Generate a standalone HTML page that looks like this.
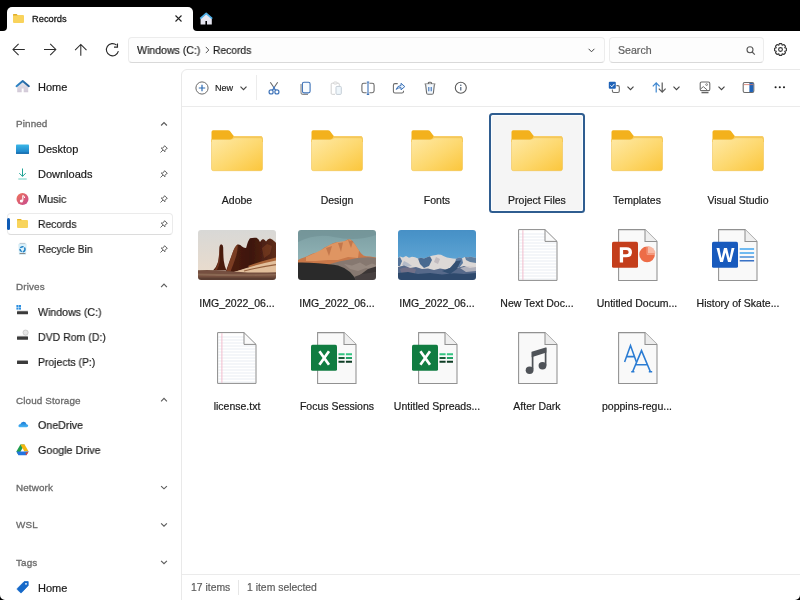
<!DOCTYPE html>
<html><head><meta charset="utf-8">
<style>
*{box-sizing:border-box;margin:0;padding:0}
html,body{width:800px;height:600px;overflow:hidden;background:#fff;font-family:"Liberation Sans",sans-serif;color:#1b1b1b}
.a{position:absolute}
svg{position:absolute;overflow:visible}
.t{position:absolute;white-space:nowrap;line-height:1;will-change:transform;-webkit-text-stroke:0.2px currentColor}
</style></head><body>

<!-- title / tab bar -->
<div class="a" style="left:0;top:0;width:800px;height:7px;background:#000"></div>
<div class="a" style="left:0;top:0;width:7px;height:31px;background:#000;border-bottom-right-radius:4px"></div>
<div class="a" style="left:193px;top:0;width:607px;height:31px;background:#000;border-bottom-left-radius:4px"></div>
<div class="a" style="left:7px;top:6px;width:7px;height:7px;background:#000"></div>
<div class="a" style="left:186px;top:6px;width:7px;height:7px;background:#000"></div>
<div class="a" style="left:7px;top:7px;width:186px;height:26px;background:#fff;border-radius:5px 5px 0 0"></div>

<!-- tab content -->
<svg style="left:13px;top:14px" width="11" height="9" viewBox="0 0 11 9">
  <path d="M0 1Q0 0 1 0H3.6L4.6 1H10Q11 1 11 2V8Q11 9 10 9H1Q0 9 0 8Z" fill="#f9d35c"/>
  <path d="M0 1Q0 0 1 0H3.6L4.6 1.4H0Z" fill="#dfae2c"/>
</svg>
<div class="t" style="left:31.6px;top:15px;font-size:9.3px;color:#1b1b1b;-webkit-text-stroke:0.3px #1b1b1b">Records</div>
<svg style="left:175px;top:15px" width="7" height="7" viewBox="0 0 7 7"><path d="M0.5 0.5L6.5 6.5M6.5 0.5L0.5 6.5" stroke="#222" stroke-width="1.1"/></svg>
<svg style="left:195px;top:8px" width="22" height="20" viewBox="195 8 22 20">
  <path d="M200.6 18.6L206.2 13.6L211.8 18.6V24.6H207V21H205.4V24.6H200.6Z" fill="#e6e6f0"/>
  <path d="M200.2 18.7L206.2 13.4L212.2 18.7" stroke="#4fb0e8" stroke-width="1.7" fill="none" stroke-linejoin="round"/>
</svg>

<!-- nav buttons -->
<svg style="left:0;top:36px" width="130" height="28" viewBox="0 36 130 28">
 <path d="M13.2 49.5H24.8M18.6 43.9L13 49.5L18.6 55.1" stroke="#2b2b2b" stroke-width="1.05" fill="none"/>
 <path d="M44 49.5H55.8M50.2 43.9L55.8 49.5L50.2 55.1" stroke="#2b2b2b" stroke-width="1.05" fill="none"/>
 <path d="M80.8 44.6V55.8M75.1 50.1L80.8 44.4L86.5 50.1" stroke="#2b2b2b" stroke-width="1.05" fill="none"/>
 <path d="M118.4 51.2A6.1 6.1 0 1 1 116.6 45.2" stroke="#2b2b2b" stroke-width="1.1" fill="none"/>
 <path d="M117.5 43.6V47.1H114" stroke="#2b2b2b" stroke-width="1.1" fill="none"/>
</svg>
<!-- address bar -->
<div class="a" style="left:128px;top:37px;width:477px;height:26px;background:#fdfdfd;border:1px solid #ececec;border-bottom-color:#d9d9d9;border-radius:4px"></div>
<div class="t" style="left:137px;top:45px;font-size:11px;transform:scaleX(0.96);transform-origin:0 0">Windows (C:)</div>
<svg style="left:204.6px;top:46px" width="5" height="8" viewBox="0 0 5 8"><path d="M0.8 0.9L3.8 4L0.8 7.1" stroke="#555" stroke-width="1" fill="none"/></svg>
<div class="t" style="left:212.8px;top:45px;font-size:11px;transform:scaleX(0.935);transform-origin:0 0">Records</div>
<svg style="left:588px;top:48px" width="7" height="5" viewBox="0 0 7 5"><path d="M0.6 0.8L3.5 3.8L6.4 0.8" stroke="#444" stroke-width="1" fill="none"/></svg>

<!-- search -->
<div class="a" style="left:609px;top:37px;width:155px;height:26px;background:#fdfdfd;border:1px solid #ececec;border-bottom-color:#d9d9d9;border-radius:4px"></div>
<div class="t" style="left:618.3px;top:45.3px;font-size:10.6px;color:#606060">Search</div>
<svg style="left:746px;top:46px" width="10" height="9" viewBox="0 0 10 9"><circle cx="4" cy="3.8" r="3" stroke="#555" stroke-width="1.1" fill="none"/><path d="M6.2 6L8.8 8.6" stroke="#555" stroke-width="1.1"/></svg>
<svg style="left:774px;top:43px" width="13" height="13" viewBox="0 0 13 13"><path d="M5.3 0.6H7.7L8.2 2.3L9.8 1.5L11.5 3.2L10.7 4.8L12.4 5.3V7.7L10.7 8.2L11.5 9.8L9.8 11.5L8.2 10.7L7.7 12.4H5.3L4.8 10.7L3.2 11.5L1.5 9.8L2.3 8.2L0.6 7.7V5.3L2.3 4.8L1.5 3.2L3.2 1.5L4.8 2.3Z" stroke="#333" stroke-width="1.1" fill="none" stroke-linejoin="round"/><circle cx="6.5" cy="6.5" r="1.9" stroke="#333" stroke-width="1.1" fill="none"/></svg>

<!-- content card -->
<div class="a" style="left:181px;top:69px;width:640px;height:560px;border:1px solid #e9e9e9;border-radius:6px;background:#fff"></div>
<div class="a" style="left:182px;top:106px;width:618px;height:1px;background:#ebebeb"></div>
<div class="a" style="left:182px;top:574px;width:618px;height:1px;background:#ebebeb"></div>

<!-- window corners -->
<svg style="left:0;top:595px" width="5" height="5" viewBox="0 0 5 5"><path d="M0 0V5H5A5 5 0 0 1 0 0Z" fill="#000"/></svg>
<svg style="left:795px;top:595px" width="5" height="5" viewBox="0 0 5 5"><path d="M5 0V5H0A5 5 0 0 0 5 0Z" fill="#000"/></svg>
<!-- sidebar -->
<div class="a" style="left:7px;top:213px;width:166px;height:22px;background:#fff;border:1px solid #ebebeb;border-bottom-color:#dcdcdc;border-radius:4px"></div>
<div class="a" style="left:7px;top:218px;width:2.5px;height:12px;background:#0f5bb5;border-radius:2px"></div>
<div class="t" style="left:37.6px;top:82.1px;font-size:11px;color:#1b1b1b;">Home</div>
<div class="t" style="left:16.2px;top:119.2px;font-size:9.9px;color:#6c6c6c;-webkit-text-stroke:0.32px #6c6c6c;letter-spacing:0.12px">Pinned</div>
<div class="t" style="left:16.2px;top:282.2px;font-size:9.9px;color:#6c6c6c;-webkit-text-stroke:0.32px #6c6c6c;letter-spacing:0.12px">Drives</div>
<div class="t" style="left:16.2px;top:396.0px;font-size:9.9px;color:#6c6c6c;-webkit-text-stroke:0.32px #6c6c6c;letter-spacing:0.12px">Cloud Storage</div>
<div class="t" style="left:16.2px;top:483.0px;font-size:9.9px;color:#6c6c6c;-webkit-text-stroke:0.32px #6c6c6c;letter-spacing:0.12px">Network</div>
<div class="t" style="left:16.2px;top:520.3px;font-size:9.9px;color:#6c6c6c;-webkit-text-stroke:0.32px #6c6c6c;letter-spacing:0.12px">WSL</div>
<div class="t" style="left:16.2px;top:557.8px;font-size:9.9px;color:#6c6c6c;-webkit-text-stroke:0.32px #6c6c6c;letter-spacing:0.12px">Tags</div>
<div class="t" style="left:37.6px;top:144.2px;font-size:11px;color:#1b1b1b;">Desktop</div>
<div class="t" style="left:37.6px;top:169.4px;font-size:11px;color:#1b1b1b;">Downloads</div>
<div class="t" style="left:37.6px;top:194.4px;font-size:11px;color:#1b1b1b;transform:scaleX(0.986);transform-origin:0 0">Music</div>
<div class="t" style="left:37.6px;top:218.6px;font-size:11px;color:#1b1b1b;transform:scaleX(0.94);transform-origin:0 0">Records</div>
<div class="t" style="left:37.6px;top:243.7px;font-size:11px;color:#1b1b1b;transform:scaleX(0.94);transform-origin:0 0">Recycle Bin</div>
<div class="t" style="left:37.6px;top:306.5px;font-size:11px;color:#1b1b1b;transform:scaleX(0.963);transform-origin:0 0">Windows (C:)</div>
<div class="t" style="left:37.6px;top:331.5px;font-size:11px;color:#1b1b1b;transform:scaleX(0.957);transform-origin:0 0">DVD Rom (D:)</div>
<div class="t" style="left:37.6px;top:356.7px;font-size:11px;color:#1b1b1b;transform:scaleX(0.947);transform-origin:0 0">Projects (P:)</div>
<div class="t" style="left:37.6px;top:420.3px;font-size:11px;color:#1b1b1b;transform:scaleX(0.97);transform-origin:0 0">OneDrive</div>
<div class="t" style="left:37.6px;top:445.4px;font-size:11px;color:#1b1b1b;transform:scaleX(0.975);transform-origin:0 0">Google Drive</div>
<div class="t" style="left:37.6px;top:582.8px;font-size:11px;color:#1b1b1b;">Home</div>
<svg style="left:155px;top:116px" width="16" height="14" viewBox="155 116 16 14"><path d="M161.1 125.50L164 122.50L166.9 125.50" stroke="#5c5c5c" stroke-width="1.15" fill="none"/></svg>
<svg style="left:155px;top:278px" width="16" height="14" viewBox="155 278 16 14"><path d="M161.1 287.20L164 284.20L166.9 287.20" stroke="#5c5c5c" stroke-width="1.15" fill="none"/></svg>
<svg style="left:155px;top:392px" width="16" height="14" viewBox="155 392 16 14"><path d="M161.1 401.40L164 398.40L166.9 401.40" stroke="#5c5c5c" stroke-width="1.15" fill="none"/></svg>
<svg style="left:155px;top:482px" width="16" height="14" viewBox="155 482 16 14"><path d="M161.1 486.10L164 488.80L166.9 486.10" stroke="#5c5c5c" stroke-width="1.15" fill="none"/></svg>
<svg style="left:155px;top:520px" width="16" height="14" viewBox="155 520 16 14"><path d="M161.1 523.40L164 526.10L166.9 523.40" stroke="#5c5c5c" stroke-width="1.15" fill="none"/></svg>
<svg style="left:155px;top:557px" width="16" height="14" viewBox="155 557 16 14"><path d="M161.1 560.90L164 563.60L166.9 560.90" stroke="#5c5c5c" stroke-width="1.15" fill="none"/></svg>
<svg style="left:160px;top:145px" width="8" height="8" viewBox="0 0 8 8"><path d="M4.6 0.7L7.3 3.4L6.2 3.9L4.9 5.6L5 6.8L1.2 3L2.4 3.1L4.1 1.8Z" stroke="#555" stroke-width="0.9" fill="none" stroke-linejoin="round"/><path d="M3.1 4.9L0.5 7.5" stroke="#555" stroke-width="0.9"/></svg>
<svg style="left:160px;top:170px" width="8" height="8" viewBox="0 0 8 8"><path d="M4.6 0.7L7.3 3.4L6.2 3.9L4.9 5.6L5 6.8L1.2 3L2.4 3.1L4.1 1.8Z" stroke="#555" stroke-width="0.9" fill="none" stroke-linejoin="round"/><path d="M3.1 4.9L0.5 7.5" stroke="#555" stroke-width="0.9"/></svg>
<svg style="left:160px;top:195px" width="8" height="8" viewBox="0 0 8 8"><path d="M4.6 0.7L7.3 3.4L6.2 3.9L4.9 5.6L5 6.8L1.2 3L2.4 3.1L4.1 1.8Z" stroke="#555" stroke-width="0.9" fill="none" stroke-linejoin="round"/><path d="M3.1 4.9L0.5 7.5" stroke="#555" stroke-width="0.9"/></svg>
<svg style="left:160px;top:220px" width="8" height="8" viewBox="0 0 8 8"><path d="M4.6 0.7L7.3 3.4L6.2 3.9L4.9 5.6L5 6.8L1.2 3L2.4 3.1L4.1 1.8Z" stroke="#555" stroke-width="0.9" fill="none" stroke-linejoin="round"/><path d="M3.1 4.9L0.5 7.5" stroke="#555" stroke-width="0.9"/></svg>
<svg style="left:160px;top:245px" width="8" height="8" viewBox="0 0 8 8"><path d="M4.6 0.7L7.3 3.4L6.2 3.9L4.9 5.6L5 6.8L1.2 3L2.4 3.1L4.1 1.8Z" stroke="#555" stroke-width="0.9" fill="none" stroke-linejoin="round"/><path d="M3.1 4.9L0.5 7.5" stroke="#555" stroke-width="0.9"/></svg>
<svg style="left:12px;top:76px" width="22" height="20" viewBox="12 76 22 20">
 <defs><linearGradient id="hb" x1="0" y1="0" x2="0" y2="1"><stop offset="0" stop-color="#e4e8f0"/><stop offset="1" stop-color="#d2c8d6"/></linearGradient>
 <linearGradient id="hr" x1="0" y1="0" x2="1" y2="0"><stop offset="0" stop-color="#2d86c8"/><stop offset="1" stop-color="#245f98"/></linearGradient></defs>
 <path d="M17.2 85.6L22.7 81.4L28.2 85.6V92.3H23.7V88.4H21.7V92.3H17.2Z" fill="url(#hb)"/>
 <path d="M16.5 86.2L22.7 81L28.9 86.2" stroke="url(#hr)" stroke-width="1.9" fill="none" stroke-linecap="round" stroke-linejoin="round"/>
</svg>
<svg style="left:16px;top:144px" width="13" height="10" viewBox="0 0 13 10">
 <defs><linearGradient id="dk" x1="0" y1="0" x2="0" y2="1"><stop offset="0" stop-color="#3bb8e8"/><stop offset="1" stop-color="#1a7cc4"/></linearGradient></defs>
 <rect x="0" y="0.4" width="13" height="9.4" rx="0.8" fill="url(#dk)"/>
 <rect x="0" y="8.6" width="13" height="1.2" fill="#1569aa"/>
</svg>
<svg style="left:18px;top:168px" width="9" height="12" viewBox="0 0 9 12">
 <path d="M4.5 0.5V8.3M1.3 5.2L4.5 8.4L7.7 5.2" stroke="#21a396" stroke-width="1" fill="none"/>
 <path d="M0.3 11H8.7" stroke="#6ccfc4" stroke-width="1"/>
</svg>
<svg style="left:16px;top:193px" width="13" height="12" viewBox="0 0 13 12">
 <defs><linearGradient id="mu" x1="0" y1="0" x2="1" y2="1"><stop offset="0" stop-color="#f0745a"/><stop offset="1" stop-color="#c6498f"/></linearGradient></defs>
 <circle cx="6.5" cy="6" r="6" fill="url(#mu)"/>
 <path d="M6.8 2.5V7.7" stroke="#fff" stroke-width="1.1"/><path d="M6.8 2.5Q8.8 3.2 8.6 5" stroke="#fff" stroke-width="1" fill="none"/>
 <circle cx="5.4" cy="8" r="1.6" fill="#fff"/>
</svg>
<svg style="left:17px;top:219px" width="11" height="9" viewBox="0 0 11 9">
 <path d="M0 1Q0 0 1 0H3.8L4.8 1H10Q11 1 11 2V8Q11 9 10 9H1Q0 9 0 8Z" fill="#f8d45c"/>
 <path d="M0 1Q0 0 1 0H3.8L4.8 1.3H0Z" fill="#e8b323"/>
</svg>
<svg style="left:18px;top:243px" width="9" height="12" viewBox="0 0 9 12">
 <path d="M0.8 1.2H8.2L7.6 11.4H1.4Z" fill="#dff3fb" stroke="#b9dcec" stroke-width="0.5"/>
 <path d="M1.6 0.4H7.4" stroke="#a8b8c4" stroke-width="0.8"/>
 <circle cx="4.5" cy="6.2" r="2.5" stroke="#1e7fc4" stroke-width="1.5" fill="none" stroke-dasharray="3.6 0.9"/>
 <path d="M1.6 10.5H7.4" stroke="#8a8a8a" stroke-width="1"/>
</svg>
<svg style="left:16px;top:304px" width="13" height="11" viewBox="0 0 13 11">
 <rect x="0.4" y="1" width="2.1" height="2.1" fill="#2d8fe0"/><rect x="2.9" y="1" width="2.1" height="2.1" fill="#2d8fe0"/>
 <rect x="0.4" y="3.5" width="2.1" height="2.1" fill="#2d8fe0"/><rect x="2.9" y="3.5" width="2.1" height="2.1" fill="#2d8fe0"/>
 <rect x="1" y="6.6" width="11" height="1" fill="#c9c9c9"/>
 <rect x="1" y="7.3" width="11" height="3" rx="0.5" fill="#3b3b3b"/>
</svg>
<svg style="left:16px;top:329px" width="13" height="12" viewBox="0 0 13 12">
 <circle cx="9.6" cy="3.6" r="2.6" fill="#e8e8e8" stroke="#b9b9b9" stroke-width="0.6"/>
 <rect x="1" y="6.8" width="11" height="1" fill="#c9c9c9"/>
 <rect x="1" y="7.5" width="11" height="3.2" rx="0.5" fill="#3b3b3b"/>
</svg>
<svg style="left:16px;top:358px" width="13" height="8" viewBox="0 0 13 8">
 <rect x="1" y="2" width="11" height="1" fill="#c9c9c9"/>
 <rect x="1" y="2.7" width="11" height="3.4" rx="0.5" fill="#3b3b3b"/>
</svg>
<svg style="left:17.6px;top:421.2px" width="10.6" height="7" viewBox="0 0 12 8" preserveAspectRatio="none">
 <defs><linearGradient id="od" x1="0" y1="0" x2="0" y2="1"><stop offset="0" stop-color="#1677d4"/><stop offset="1" stop-color="#4ab8f6"/></linearGradient></defs>
 <path d="M2.2 7.2Q0.3 7.2 0.5 5.3Q0.8 3.8 2.6 3.8Q3.5 0.6 6.6 0.8Q9.2 1.1 9.6 3.6Q11.6 3.7 11.6 5.5Q11.5 7.2 9.6 7.2Z" fill="url(#od)"/>
</svg>
<svg style="left:16px;top:444px" width="13" height="12" viewBox="0 0 13 12">
 <path d="M4.4 0.6H8.6L4.6 7.6L2.5 11.2L0.4 7.6Z" fill="#1f9d4c"/>
 <path d="M4.4 0.6H8.6L12.6 7.6H8.4Z" fill="#f6b60e"/>
 <path d="M0.4 7.6H12.6L10.5 11.2H2.5Z" fill="#2374e1"/>
 <path d="M12.6 7.6L10.5 11.2L9.3 9.1Z" fill="#e2452f"/>
</svg>
<svg style="left:17px;top:580.5px" width="12" height="13" viewBox="0 0 12 13">
 <path d="M7.2 0.6H11.2V4.6L4.6 11.6Q4 12.2 3.4 11.6L0.4 8.6Q-0.2 8 0.4 7.4Z" fill="#1669c9" stroke="#1669c9" stroke-width="0.8" stroke-linejoin="round"/>
 <circle cx="9" cy="2.8" r="0.9" fill="#fff"/>
</svg>
<!-- toolbar -->
<svg style="left:195px;top:81px" width="14" height="14" viewBox="0 0 14 14"><circle cx="7" cy="7" r="6.1" stroke="#6a6a6a" stroke-width="1" fill="#fff"/><path d="M7 3.8V10.2M3.8 7H10.2" stroke="#2f6cb3" stroke-width="1.2"/></svg>
<div class="t" style="left:215px;top:84px;font-size:9.1px;color:#1b1b1b;-webkit-text-stroke:0.15px #1b1b1b">New</div>
<svg style="left:240px;top:86px" width="7" height="4.5" viewBox="0 0 7 4.5"><path d="M0.5 0.7L3.5 3.7L6.5 0.7" stroke="#444" stroke-width="1.15" fill="none"/></svg>
<div class="a" style="left:256px;top:75px;width:1px;height:25px;background:#ececec"></div>
<svg style="left:264px;top:78px" width="20" height="20" viewBox="264 78 20 20">
 <path d="M270.3 82.2L273.4 86.8M277.7 82.2L274.6 86.8" stroke="#6b6b6b" stroke-width="1.1"/>
 <path d="M273.2 86.5L274 88.4L274.8 86.5M272.3 90.2L274 88.2L275.7 90.2" stroke="#3d72b8" stroke-width="1.1" fill="none"/>
 <circle cx="271.1" cy="91.9" r="2.05" stroke="#3d72b8" stroke-width="1.15" fill="#fff"/><circle cx="276.9" cy="91.9" r="2.05" stroke="#3d72b8" stroke-width="1.15" fill="#fff"/>
</svg>
<svg style="left:300px;top:81px" width="11" height="14" viewBox="0 0 11 14">
 <path d="M1 3V11.3Q1 13.4 3.1 13.4H8" stroke="#8d8d8d" stroke-width="1.1" fill="none"/>
 <rect x="2.4" y="1.3" width="7.7" height="10.6" rx="1.6" stroke="#3d72b8" stroke-width="1.1" fill="#f7fbff"/>
</svg>
<svg style="left:330px;top:81px" width="12" height="14" viewBox="0 0 12 14">
 <path d="M5 13.3H2.2Q1.2 13.3 1.2 12.3V3.2Q1.2 2.2 2.2 2.2H8.3Q9.3 2.2 9.3 3.2V4.8" stroke="#cfcfcf" stroke-width="1" fill="none"/>
 <rect x="3.7" y="1" width="3.4" height="2" rx="0.8" stroke="#cfcfcf" stroke-width="0.9" fill="#fff"/>
 <rect x="6" y="5.4" width="5.3" height="8" rx="1" stroke="#c5cdd6" stroke-width="1" fill="#eef6fb"/>
</svg>
<svg style="left:361px;top:81px" width="14" height="14" viewBox="0 0 14 14">
 <path d="M5.6 2.3H2.8Q0.9 2.3 0.9 4.2V9.8Q0.9 11.7 2.8 11.7H5.6M8.4 2.3H11.2Q13.1 2.3 13.1 4.2V9.8Q13.1 11.7 11.2 11.7H8.4" stroke="#6b6b6b" stroke-width="1.1" fill="none"/>
 <path d="M7 1V13.4M5.8 1H8.2M5.8 13.4H8.2" stroke="#3d72b8" stroke-width="1.1"/>
</svg>
<svg style="left:390px;top:78px" width="20" height="20" viewBox="390 78 20 20">
 <path d="M397.7 83.6H395Q393.4 83.6 393.4 85.2V91.4Q393.4 93 395 93H401.9Q403.5 93 403.5 91.4V90.8" stroke="#6b6b6b" stroke-width="1.05" fill="none"/>
 <path d="M396.2 89.4Q397.3 85.7 401 85.5V83.3L404.8 86.6L401 89.8V87.6Q398.4 87.6 396.2 89.4Z" stroke="#3d72b8" stroke-width="1" fill="#e6f1fb" stroke-linejoin="round"/>
</svg>
<svg style="left:424px;top:81px" width="12" height="14" viewBox="0 0 12 14">
 <path d="M0.6 3H11.4M4.3 3V2.4Q4.3 1.2 5.5 1.2H6.5Q7.7 1.2 7.7 2.4V3" stroke="#6b6b6b" stroke-width="1.1" fill="none"/>
 <path d="M1.6 3.2L2.6 12Q2.8 13.3 4 13.3H8Q9.2 13.3 9.4 12L10.4 3.2" stroke="#6b6b6b" stroke-width="1.1" fill="#f3f8fd"/>
 <path d="M4.8 6V10.3M7.2 6V10.3" stroke="#3d72b8" stroke-width="1.1"/>
</svg>
<svg style="left:454px;top:81px" width="14" height="14" viewBox="0 0 14 14">
 <circle cx="6.8" cy="6.7" r="5.5" stroke="#5a5a5a" stroke-width="1.1" fill="#fff"/>
 <circle cx="6.8" cy="4.2" r="0.75" fill="#3f5570"/><path d="M6.8 6V9.6" stroke="#3f5570" stroke-width="1.1"/>
</svg>
<!-- right toolbar -->
<svg style="left:608px;top:81px" width="13" height="13" viewBox="0 0 13 13">
 <path d="M8.4 4.6H9.8Q11.3 4.6 11.3 6.1V10Q11.3 11.5 9.8 11.5H5.9Q4.4 11.5 4.4 10V8.6" stroke="#6b6b6b" stroke-width="1.1" fill="none"/>
 <rect x="0.8" y="0.8" width="7" height="7" rx="1" fill="#1f63b8"/>
 <path d="M2.4 4.4L3.8 5.8L6.4 2.9" stroke="#fff" stroke-width="1" fill="none"/>
</svg>
<svg style="left:627px;top:86px" width="7" height="4.5" viewBox="0 0 7 4.5"><path d="M0.5 0.7L3.5 3.7L6.5 0.7" stroke="#444" stroke-width="1.15" fill="none"/></svg>
<svg style="left:652px;top:82px" width="15" height="11" viewBox="0 0 15 11">
 <path d="M4.2 10.5V1M0.8 4.3L4.2 0.9L7.6 4.3" stroke="#3d86d0" stroke-width="1.2" fill="none"/>
 <path d="M10.2 0.5V10M6.8 6.7L10.2 10.1L13.6 6.7" stroke="#5a5a5a" stroke-width="1.2" fill="none"/>
</svg>
<svg style="left:673px;top:86px" width="7" height="4.5" viewBox="0 0 7 4.5"><path d="M0.5 0.7L3.5 3.7L6.5 0.7" stroke="#444" stroke-width="1.15" fill="none"/></svg>
<svg style="left:699px;top:81px" width="12" height="13" viewBox="0 0 12 13">
 <rect x="1.2" y="1" width="9.6" height="8.6" rx="1.4" stroke="#6b6b6b" stroke-width="1.1" fill="#fff"/>
 <circle cx="7.6" cy="3.6" r="0.9" stroke="#6b6b6b" stroke-width="0.8" fill="none"/>
 <path d="M1.4 8.2L4.3 5.6L8.2 9" stroke="#6b6b6b" stroke-width="1" fill="none"/>
 <path d="M2.5 11.7H9.5" stroke="#4a4a4a" stroke-width="1.1"/>
</svg>
<svg style="left:718px;top:86px" width="7" height="4.5" viewBox="0 0 7 4.5"><path d="M0.5 0.7L3.5 3.7L6.5 0.7" stroke="#444" stroke-width="1.15" fill="none"/></svg>
<svg style="left:742px;top:81px" width="13" height="13" viewBox="0 0 13 13">
 <rect x="1.2" y="1.5" width="10.6" height="10" rx="1.5" stroke="#6b6b6b" stroke-width="1.1" fill="#fff"/>
 <path d="M7.4 2.1H10.4Q11.3 2.1 11.3 3V10.1Q11.3 11 10.4 11H7.4Z" fill="#1f63b8"/>
 <path d="M1.8 3.6H11.2" stroke="#d9776a" stroke-width="0.8"/>
</svg>
<svg style="left:770px;top:80px" width="20" height="14" viewBox="770 80 20 14"><circle cx="775.6" cy="87.2" r="1.05" fill="#1b1b1b"/><circle cx="779.8" cy="87.2" r="1.05" fill="#1b1b1b"/><circle cx="784" cy="87.2" r="1.05" fill="#1b1b1b"/></svg>
<!-- grid -->
<div class="a" style="left:488.8px;top:113px;width:96.2px;height:99.8px;background:#f5f5f5;border:2px solid #2f5d90;border-radius:3.5px;box-shadow:inset 0 0 0 1px #fafdff"></div>
<svg width="0" height="0" style="left:0;top:0"><defs>
<linearGradient id="fb" x1="0" y1="0" x2="1" y2="1"><stop offset="0" stop-color="#fee9a6"/><stop offset="0.55" stop-color="#fdd86e"/><stop offset="1" stop-color="#fbc63c"/></linearGradient>
<linearGradient id="sk1" x1="0" y1="0" x2="0" y2="1"><stop offset="0" stop-color="#d8d8d6"/><stop offset="1" stop-color="#ecdccb"/></linearGradient>
<linearGradient id="rk1" x1="0" y1="0" x2="1" y2="0"><stop offset="0" stop-color="#4f1e12"/><stop offset="0.5" stop-color="#3d160c"/><stop offset="1" stop-color="#5e2c1a"/></linearGradient>
<linearGradient id="sk2" x1="0" y1="0" x2="0" y2="1"><stop offset="0" stop-color="#7b9ea2"/><stop offset="1" stop-color="#9fc0c2"/></linearGradient>
<linearGradient id="mt2" x1="0" y1="0" x2="0" y2="1"><stop offset="0" stop-color="#e79b68"/><stop offset="1" stop-color="#c56a42"/></linearGradient>
<linearGradient id="sk3" x1="0" y1="0" x2="0" y2="1"><stop offset="0" stop-color="#4690c6"/><stop offset="1" stop-color="#6cb1dc"/></linearGradient>
<filter id="bl" x="-5%" y="-5%" width="110%" height="110%"><feGaussianBlur stdDeviation="0.45"/></filter>
<clipPath id="rc"><rect x="0" y="0" width="78" height="50" rx="3"/></clipPath>
</defs></svg>
<svg style="left:210.5px;top:130px" width="52" height="41" viewBox="0 0 52 41">
 <path d="M0.5 2Q0.5 0.3 2.2 0.3H16.8Q18.4 0.3 19.3 1.6L22.3 5.6Q22.9 6.2 23.8 6.2H49.6Q51.5 6.2 51.5 8.1V12H0.5Z" fill="#f3b11c"/>
 <path d="M22.6 5.9H49.6Q51.5 5.9 51.5 7.8V12H20Z" fill="#f8cd66"/>
 <path d="M0.5 9.4H19Q20.6 9.4 21.8 8.6L22.8 8Q23.5 7.7 24.4 7.7H49.6Q51.5 7.7 51.5 9.6V38.8Q51.5 40.7 49.6 40.7H2.4Q0.5 40.7 0.5 38.8Z" fill="url(#fb)" stroke="#efbd45" stroke-width="0.5"/>
</svg>
<svg style="left:310.7px;top:130px" width="52" height="41" viewBox="0 0 52 41">
 <path d="M0.5 2Q0.5 0.3 2.2 0.3H16.8Q18.4 0.3 19.3 1.6L22.3 5.6Q22.9 6.2 23.8 6.2H49.6Q51.5 6.2 51.5 8.1V12H0.5Z" fill="#f3b11c"/>
 <path d="M22.6 5.9H49.6Q51.5 5.9 51.5 7.8V12H20Z" fill="#f8cd66"/>
 <path d="M0.5 9.4H19Q20.6 9.4 21.8 8.6L22.8 8Q23.5 7.7 24.4 7.7H49.6Q51.5 7.7 51.5 9.6V38.8Q51.5 40.7 49.6 40.7H2.4Q0.5 40.7 0.5 38.8Z" fill="url(#fb)" stroke="#efbd45" stroke-width="0.5"/>
</svg>
<svg style="left:410.9px;top:130px" width="52" height="41" viewBox="0 0 52 41">
 <path d="M0.5 2Q0.5 0.3 2.2 0.3H16.8Q18.4 0.3 19.3 1.6L22.3 5.6Q22.9 6.2 23.8 6.2H49.6Q51.5 6.2 51.5 8.1V12H0.5Z" fill="#f3b11c"/>
 <path d="M22.6 5.9H49.6Q51.5 5.9 51.5 7.8V12H20Z" fill="#f8cd66"/>
 <path d="M0.5 9.4H19Q20.6 9.4 21.8 8.6L22.8 8Q23.5 7.7 24.4 7.7H49.6Q51.5 7.7 51.5 9.6V38.8Q51.5 40.7 49.6 40.7H2.4Q0.5 40.7 0.5 38.8Z" fill="url(#fb)" stroke="#efbd45" stroke-width="0.5"/>
</svg>
<svg style="left:511.1px;top:130px" width="52" height="41" viewBox="0 0 52 41">
 <path d="M0.5 2Q0.5 0.3 2.2 0.3H16.8Q18.4 0.3 19.3 1.6L22.3 5.6Q22.9 6.2 23.8 6.2H49.6Q51.5 6.2 51.5 8.1V12H0.5Z" fill="#f3b11c"/>
 <path d="M22.6 5.9H49.6Q51.5 5.9 51.5 7.8V12H20Z" fill="#f8cd66"/>
 <path d="M0.5 9.4H19Q20.6 9.4 21.8 8.6L22.8 8Q23.5 7.7 24.4 7.7H49.6Q51.5 7.7 51.5 9.6V38.8Q51.5 40.7 49.6 40.7H2.4Q0.5 40.7 0.5 38.8Z" fill="url(#fb)" stroke="#efbd45" stroke-width="0.5"/>
</svg>
<svg style="left:611.3px;top:130px" width="52" height="41" viewBox="0 0 52 41">
 <path d="M0.5 2Q0.5 0.3 2.2 0.3H16.8Q18.4 0.3 19.3 1.6L22.3 5.6Q22.9 6.2 23.8 6.2H49.6Q51.5 6.2 51.5 8.1V12H0.5Z" fill="#f3b11c"/>
 <path d="M22.6 5.9H49.6Q51.5 5.9 51.5 7.8V12H20Z" fill="#f8cd66"/>
 <path d="M0.5 9.4H19Q20.6 9.4 21.8 8.6L22.8 8Q23.5 7.7 24.4 7.7H49.6Q51.5 7.7 51.5 9.6V38.8Q51.5 40.7 49.6 40.7H2.4Q0.5 40.7 0.5 38.8Z" fill="url(#fb)" stroke="#efbd45" stroke-width="0.5"/>
</svg>
<svg style="left:711.5px;top:130px" width="52" height="41" viewBox="0 0 52 41">
 <path d="M0.5 2Q0.5 0.3 2.2 0.3H16.8Q18.4 0.3 19.3 1.6L22.3 5.6Q22.9 6.2 23.8 6.2H49.6Q51.5 6.2 51.5 8.1V12H0.5Z" fill="#f3b11c"/>
 <path d="M22.6 5.9H49.6Q51.5 5.9 51.5 7.8V12H20Z" fill="#f8cd66"/>
 <path d="M0.5 9.4H19Q20.6 9.4 21.8 8.6L22.8 8Q23.5 7.7 24.4 7.7H49.6Q51.5 7.7 51.5 9.6V38.8Q51.5 40.7 49.6 40.7H2.4Q0.5 40.7 0.5 38.8Z" fill="url(#fb)" stroke="#efbd45" stroke-width="0.5"/>
</svg>
<div class="t" style="left:186.5px;width:100px;text-align:center;top:195.4px;font-size:10.5px;color:#1b1b1b">Adobe</div>
<div class="t" style="left:286.7px;width:100px;text-align:center;top:195.4px;font-size:10.5px;color:#1b1b1b">Design</div>
<div class="t" style="left:386.9px;width:100px;text-align:center;top:195.4px;font-size:10.5px;color:#1b1b1b">Fonts</div>
<div class="t" style="left:487.1px;width:100px;text-align:center;top:195.4px;font-size:10.5px;color:#1b1b1b">Project Files</div>
<div class="t" style="left:587.3px;width:100px;text-align:center;top:195.4px;font-size:10.5px;color:#1b1b1b">Templates</div>
<div class="t" style="left:687.5px;width:100px;text-align:center;top:195.4px;font-size:10.5px;color:#1b1b1b">Visual Studio</div>
<div class="t" style="left:186.5px;width:100px;text-align:center;top:298.3px;font-size:10.5px;color:#1b1b1b">IMG_2022_06...</div>
<div class="t" style="left:286.7px;width:100px;text-align:center;top:298.3px;font-size:10.5px;color:#1b1b1b">IMG_2022_06...</div>
<div class="t" style="left:386.9px;width:100px;text-align:center;top:298.3px;font-size:10.5px;color:#1b1b1b">IMG_2022_06...</div>
<div class="t" style="left:487.1px;width:100px;text-align:center;top:298.3px;font-size:10.5px;color:#1b1b1b">New Text Doc...</div>
<div class="t" style="left:587.3px;width:100px;text-align:center;top:298.3px;font-size:10.5px;color:#1b1b1b">Untitled Docum...</div>
<div class="t" style="left:687.5px;width:100px;text-align:center;top:298.3px;font-size:10.5px;color:#1b1b1b">History of Skate...</div>
<div class="t" style="left:186.5px;width:100px;text-align:center;top:401.3px;font-size:10.5px;color:#1b1b1b">license.txt</div>
<div class="t" style="left:286.7px;width:100px;text-align:center;top:401.3px;font-size:10.5px;color:#1b1b1b">Focus Sessions</div>
<div class="t" style="left:386.9px;width:100px;text-align:center;top:401.3px;font-size:10.5px;color:#1b1b1b">Untitled Spreads...</div>
<div class="t" style="left:487.1px;width:100px;text-align:center;top:401.3px;font-size:10.5px;color:#1b1b1b">After Dark</div>
<div class="t" style="left:587.3px;width:100px;text-align:center;top:401.3px;font-size:10.5px;color:#1b1b1b">poppins-regu...</div>
<svg style="left:198px;top:230px" width="78" height="50" viewBox="0 0 78 50"><g clip-path="url(#rc)"><g filter="url(#bl)">
 <rect width="78" height="50" fill="url(#sk1)"/>
 <path d="M15 40.5Q18.5 37 20 32Q21.2 27 21.3 19Q21.3 15 23.2 14.2Q25.2 14.5 25.2 17.5Q25.2 25 25.8 31Q26.6 36.5 28.5 40.5Z" fill="#4a1c10"/>
 <path d="M21.6 16Q21.2 25 20.3 31.5Q19.2 36.5 16.5 40.5H18.6Q21 36.5 21.8 31.5Z" fill="#8a4528" opacity="0.6"/>
 <path d="M28 41Q31.5 31 34.5 23Q36.8 16.5 39.5 14.6Q42 14 44 16.5Q46 18.2 48.2 17.8Q50 10.5 52 8.3Q55 7.4 58.5 7.8Q61 9 62 12Q63.5 9.5 65 9Q67 9.8 68 11.5Q70 8.5 72 8.4Q74.5 9 76 11Q77.5 12 78 13V31Q66 33.5 54 37Q44 40 36 42H28Z" fill="url(#rk1)"/>
 <path d="M34.5 23Q36.8 16.5 39.5 14.6Q40.2 19 38.2 26Q35.6 34 32.5 41.5H28.5Q31.5 31 34.5 23Z" fill="#8e4a2a" opacity="0.7"/>
 <path d="M64 18L69 14L74 16L72 24L66 28Z" fill="#7e4026" opacity="0.6"/>
 <path d="M50 36Q62 31.5 78 27.5V31.5Q64 34 52 38Z" fill="#b8703f" opacity="0.85"/>
 <path d="M36 42Q56 35 78 30.5V44H36Z" fill="#e2bf9c"/>
 <path d="M46 41Q62 36.8 78 34.6" stroke="#94603e" stroke-width="1.1" fill="none"/>
 <path d="M0 40.2Q10 39.6 18 40.3Q36 41.6 50 42.5Q66 42.8 78 42.2V50H0Z" fill="#74503f"/>
 <path d="M0 43.5Q30 44.5 78 44V45.5Q40 46.5 0 45.5Z" fill="#9a7660" opacity="0.6"/>
 <path d="M0 47.5H78V50H0Z" fill="#5a3c30"/>
</g></g></svg>
<svg style="left:298px;top:230px" width="78" height="50" viewBox="0 0 78 50"><g clip-path="url(#rc)"><g filter="url(#bl)">
 <rect width="78" height="50" fill="url(#sk2)"/>
 <path d="M0 0H78V5Q58 12 36 7Q18 3 0 12Z" fill="#6d8e92" opacity="0.55"/>
 <path d="M0 30L3 28.6L6 27.5L9 26.2L12 24.8L15 23.6L18 22.8L21 21.5L24 19.5L27 17.2L30 16L32.5 14.5L35 13.2L37.5 12.6L40 12L42 13.4L44.5 12.2L47 11L49.5 9.5L52 9.2L54.5 11L57 14.5L59 17.5L61 20.5L63 23.3L65.5 25.5L68 26.3L72 26.6L75 27L78 27.6V50H0Z" fill="#c9784a"/>
 <path d="M8 27L16 23.6L24 19.5L32.5 14.5L40 12L47 11L52 9.2L57 14.5L61 20.5L60 28L50 27L40 30L30 30L18 31L8 31Z" fill="#e39a66" opacity="0.85"/>
 <path d="M28 18L31 26L34 16Z M40 13L43 22L45 12.5Z M50 10L53 18L55 11.5Z" fill="#a85a36" opacity="0.5"/>
 <path d="M32 34Q42 30.5 52 29.5Q60 27.5 66 27.5Q70 27 74 27.5L78 28V50H40Z" fill="#86786f"/>
 <path d="M46 34L54 35.5L62 32.5L68 36L74 33.5L78 35V41L68 38L60 41L52 39Z" fill="#a3958c" opacity="0.6"/>
 <path d="M62 45L70 39L78 36.5V42L70 45Z" fill="#3a3634"/>
 <path d="M0 32.5Q10 32.3 20 33.3Q32 34.3 40 35.5Q47 37.5 52 42Q56 46 58 50H0Z" fill="#2a2c2a"/>
 <path d="M56 47L64 44L78 42V50H58Z" fill="#474140"/>
</g></g></svg>
<svg style="left:398px;top:230px" width="78" height="50" viewBox="0 0 78 50"><g clip-path="url(#rc)"><g filter="url(#bl)">
 <rect width="78" height="50" fill="url(#sk3)"/>
 <path d="M0 28L2 26.5L5 27.5L8 26L11 27.8L14 26.8L17 27.2L20 28.5L23 27.8L26 28.6L29 27.2L32 26.2L35 25.4L38 25L40 24.4L43 24.8L46 26.2L49 27.6L52 27.9L55 28.4L58 28.8L61 27.6L64 28.2L67 27L70 27.2L73 26.8L76 27.6L78 28V50H0Z" fill="#dcd8d6"/>
 <path d="M20 28.5L23 27.8L26 28.6L29 27.2L32 26.2L34 30L31 36L26 38L22 34Z" fill="#4a6a90"/>
 <path d="M0 28L2 27L4 31L2 36L0 36Z" fill="#52739a"/>
 <path d="M58 28.8L61 27.6L64 28.2L65 33L61 38L57 34Z" fill="#5b7aa0"/>
 <path d="M67 27L70 27.2L73 26.8L76 27.6L78 28V33L72 32L68 30Z" fill="#607e9e"/>
 <path d="M6 31L10 33L14 36L8 37L4 35Z" fill="#aab4c4" opacity="0.8"/>
 <path d="M38 27L42 29L40 34L36 32Z" fill="#b9b3b8" opacity="0.8"/>
 <path d="M0 37L6 35.5L12 38L18 37L24 39L30 38.5L36 40L42 38.5L48 39.5L54 37L60 37.8L66 36L72 38L78 37V50H0Z" fill="#56698a"/>
 <path d="M2 39Q10 36 18 39.5L16 45L4 45Z" fill="#7e7488" opacity="0.7"/>
 <path d="M44 41L52 38L58 31L63 30.5L59 39L52 44Z" fill="#304f72"/>
 <path d="M62 38L70 36L78 37V41L68 42Z" fill="#cfcacc" opacity="0.75"/>
 <path d="M0 43L10 42L20 44L32 43L44 44.5L56 43.2L66 44L78 43V50H0Z" fill="#2d4a6c"/>
</g></g></svg>
<svg style="left:517.5px;top:229px" width="40" height="52" viewBox="0 0 40 52">
 <defs><clipPath id="tc517"><path d="M1 1H27L39 12.6V51H1Z"/></clipPath></defs>
 <path d="M0.6 0.6H27L39 12.4V51.4H0.6Z" fill="#fff"/>
 <g clip-path="url(#tc517)"><path d="M1.4 5H38.3" stroke="#e3e8f0" stroke-width="0.8"/><path d="M1.4 8H38.3" stroke="#e3e8f0" stroke-width="0.8"/><path d="M1.4 11H38.3" stroke="#e3e8f0" stroke-width="0.8"/><path d="M1.4 14H38.3" stroke="#e3e8f0" stroke-width="0.8"/><path d="M1.4 17H38.3" stroke="#e3e8f0" stroke-width="0.8"/><path d="M1.4 20H38.3" stroke="#e3e8f0" stroke-width="0.8"/><path d="M1.4 23H38.3" stroke="#e3e8f0" stroke-width="0.8"/><path d="M1.4 26H38.3" stroke="#e3e8f0" stroke-width="0.8"/><path d="M1.4 29H38.3" stroke="#e3e8f0" stroke-width="0.8"/><path d="M1.4 32H38.3" stroke="#e3e8f0" stroke-width="0.8"/><path d="M1.4 35H38.3" stroke="#e3e8f0" stroke-width="0.8"/><path d="M1.4 38H38.3" stroke="#e3e8f0" stroke-width="0.8"/><path d="M1.4 41H38.3" stroke="#e3e8f0" stroke-width="0.8"/><path d="M1.4 44H38.3" stroke="#e3e8f0" stroke-width="0.8"/><path d="M1.4 47H38.3" stroke="#e3e8f0" stroke-width="0.8"/><path d="M1.4 50H38.3" stroke="#e3e8f0" stroke-width="0.8"/><path d="M4.9 1.2V50.8" stroke="#f3b6c8" stroke-width="0.9"/></g>
 <path d="M27 0.6V12.4H39Z" fill="#fafafa"/>
 <path d="M0.6 0.6H27L39 12.4V51.4H0.6Z" fill="none" stroke="#8c8c8c" stroke-width="1"/>
 <path d="M27 0.6V12.4H39" fill="none" stroke="#8c8c8c" stroke-width="1"/>
</svg>
<svg style="left:217px;top:332px" width="40" height="52" viewBox="0 0 40 52">
 <defs><clipPath id="tc217"><path d="M1 1H27L39 12.6V51H1Z"/></clipPath></defs>
 <path d="M0.6 0.6H27L39 12.4V51.4H0.6Z" fill="#fff"/>
 <g clip-path="url(#tc217)"><path d="M1.4 5H38.3" stroke="#e3e8f0" stroke-width="0.8"/><path d="M1.4 8H38.3" stroke="#e3e8f0" stroke-width="0.8"/><path d="M1.4 11H38.3" stroke="#e3e8f0" stroke-width="0.8"/><path d="M1.4 14H38.3" stroke="#e3e8f0" stroke-width="0.8"/><path d="M1.4 17H38.3" stroke="#e3e8f0" stroke-width="0.8"/><path d="M1.4 20H38.3" stroke="#e3e8f0" stroke-width="0.8"/><path d="M1.4 23H38.3" stroke="#e3e8f0" stroke-width="0.8"/><path d="M1.4 26H38.3" stroke="#e3e8f0" stroke-width="0.8"/><path d="M1.4 29H38.3" stroke="#e3e8f0" stroke-width="0.8"/><path d="M1.4 32H38.3" stroke="#e3e8f0" stroke-width="0.8"/><path d="M1.4 35H38.3" stroke="#e3e8f0" stroke-width="0.8"/><path d="M1.4 38H38.3" stroke="#e3e8f0" stroke-width="0.8"/><path d="M1.4 41H38.3" stroke="#e3e8f0" stroke-width="0.8"/><path d="M1.4 44H38.3" stroke="#e3e8f0" stroke-width="0.8"/><path d="M1.4 47H38.3" stroke="#e3e8f0" stroke-width="0.8"/><path d="M1.4 50H38.3" stroke="#e3e8f0" stroke-width="0.8"/><path d="M4.9 1.2V50.8" stroke="#f3b6c8" stroke-width="0.9"/></g>
 <path d="M27 0.6V12.4H39Z" fill="#fafafa"/>
 <path d="M0.6 0.6H27L39 12.4V51.4H0.6Z" fill="none" stroke="#8c8c8c" stroke-width="1"/>
 <path d="M27 0.6V12.4H39" fill="none" stroke="#8c8c8c" stroke-width="1"/>
</svg>
<svg style="left:611.5px;top:229px" width="46" height="52" viewBox="-6 0 46 52">
 <path d="M0.6 0.6H27L39 12.4V51.4H0.6Z" fill="#f9f9f9" stroke="#919191" stroke-width="1.05"/>
 <path d="M27 0.6V12.4H39" fill="#efefef" stroke="#919191" stroke-width="1.05"/>
 <rect x="-6" y="12.8" width="26" height="26" rx="1.6" fill="#c43e1c"/>
 <path d="M1.8 33.5V18.2H8.4Q14 18.2 14 23.2Q14 28.2 8.4 28.2H5.1V33.5Z M5.1 21.1V25.3H8.2Q10.7 25.3 10.7 23.2Q10.7 21.1 8.2 21.1Z" fill="#fff" fill-rule="evenodd"/>
 <circle cx="29.1" cy="25.4" r="7.8" fill="#ed6c47"/>
 <path d="M30 24.5V17.1A7.8 7.8 0 0 1 37.4 24.5Z" fill="#f8b9a4"/>
 <path d="M29.1 25.4V17.6M29.1 25.4H36.9" stroke="#fff" stroke-width="0.6" opacity="0.6"/>
</svg>
<svg style="left:711.5px;top:229px" width="46" height="52" viewBox="-6 0 46 52">
 <path d="M0.6 0.6H27L39 12.4V51.4H0.6Z" fill="#f9f9f9" stroke="#919191" stroke-width="1.05"/>
 <path d="M27 0.6V12.4H39" fill="#efefef" stroke="#919191" stroke-width="1.05"/>
 <rect x="-6" y="12.8" width="26" height="26" rx="1.6" fill="#185abd"/>
 <path d="M-1.5 19H1.4L3.5 29.2L6 19H9L11.5 29.2L13.6 19H16.5L12.9 33H10L7.5 23.4L5 33H2.1Z" fill="#fff"/>
 <path d="M21.7 20H36.1M21.7 24H36.1" stroke="#41a5ee" stroke-width="1.3"/><path d="M21.7 28H36.1" stroke="#2b7cd3" stroke-width="1.3"/><path d="M21.7 31.8H36.1" stroke="#185abd" stroke-width="1.3"/>
</svg>
<svg style="left:311px;top:332px" width="46" height="52" viewBox="-6 0 46 52">
 <path d="M0.6 0.6H27L39 12.4V51.4H0.6Z" fill="#f9f9f9" stroke="#919191" stroke-width="1.05"/>
 <path d="M27 0.6V12.4H39" fill="#efefef" stroke="#919191" stroke-width="1.05"/>
 <rect x="-6" y="12.8" width="26" height="26" rx="1.6" fill="#107c41"/>
 <path d="M2.4 19.2L12 32.8M12 19.2L2.4 32.8" stroke="#fff" stroke-width="2.7"/>
 <path d="M21.5 22.2H27.6M28.9 22.2H35" stroke="#33c481" stroke-width="2"/><path d="M21.5 26H27.6" stroke="#185c37" stroke-width="2"/><path d="M28.9 26H35" stroke="#21a366" stroke-width="2"/><path d="M21.5 29.8H27.6M28.9 29.8H35" stroke="#0e3e24" stroke-width="2"/>
</svg>
<svg style="left:411.5px;top:332px" width="46" height="52" viewBox="-6 0 46 52">
 <path d="M0.6 0.6H27L39 12.4V51.4H0.6Z" fill="#f9f9f9" stroke="#919191" stroke-width="1.05"/>
 <path d="M27 0.6V12.4H39" fill="#efefef" stroke="#919191" stroke-width="1.05"/>
 <rect x="-6" y="12.8" width="26" height="26" rx="1.6" fill="#107c41"/>
 <path d="M2.4 19.2L12 32.8M12 19.2L2.4 32.8" stroke="#fff" stroke-width="2.7"/>
 <path d="M21.5 22.2H27.6M28.9 22.2H35" stroke="#33c481" stroke-width="2"/><path d="M21.5 26H27.6" stroke="#185c37" stroke-width="2"/><path d="M28.9 26H35" stroke="#21a366" stroke-width="2"/><path d="M21.5 29.8H27.6M28.9 29.8H35" stroke="#0e3e24" stroke-width="2"/>
</svg>
<svg style="left:517.5px;top:332px" width="40" height="52" viewBox="0 0 40 52">
 <path d="M0.6 0.6H27L39 12.4V51.4H0.6Z" fill="#f9f9f9" stroke="#919191" stroke-width="1.05" stroke-linejoin="miter"/>
 <path d="M27 0.6V12.4H39" fill="#ececec" stroke="#919191" stroke-width="1.05"/>
 <path d="M13.6 19.8L28.4 15.2V20.6L13.6 25.2Z" fill="#4f5358"/>
 <path d="M14.6 20V37.6M27.6 16V33.6" stroke="#4f5358" stroke-width="1.7"/>
 <ellipse cx="11.6" cy="38.2" rx="3.9" ry="3.7" fill="#4f5358"/><ellipse cx="24.5" cy="33.8" rx="3.9" ry="3.7" fill="#4f5358"/>
</svg>
<svg style="left:617.5px;top:332px" width="40" height="52" viewBox="0 0 40 52">
 <path d="M0.6 0.6H27L39 12.4V51.4H0.6Z" fill="#f9f9f9" stroke="#919191" stroke-width="1.05" stroke-linejoin="miter"/>
 <path d="M27 0.6V12.4H39" fill="#ececec" stroke="#919191" stroke-width="1.05"/>
 <path d="M6.6 30L12.5 13.6L18.4 30M8.6 24.6H16.4" stroke="#2b7cd3" stroke-width="1.55" fill="none"/>
 <path d="M14.6 39.8L23.5 18.6L32.4 39.8M17.8 32.8H29.2M13.2 39.8H16.4M30.8 39.8H34.2" stroke="#2b7cd3" stroke-width="1.6" fill="none"/>
</svg>
<!-- status bar -->
<div class="t" style="left:191px;top:583.3px;font-size:10.4px;color:#5c5c5c">17 items</div>
<div class="a" style="left:238px;top:580px;width:1px;height:15px;background:#e6e6e6"></div>
<div class="t" style="left:246.5px;top:583.3px;font-size:10.4px;color:#5c5c5c">1 item selected</div>
</body></html>
